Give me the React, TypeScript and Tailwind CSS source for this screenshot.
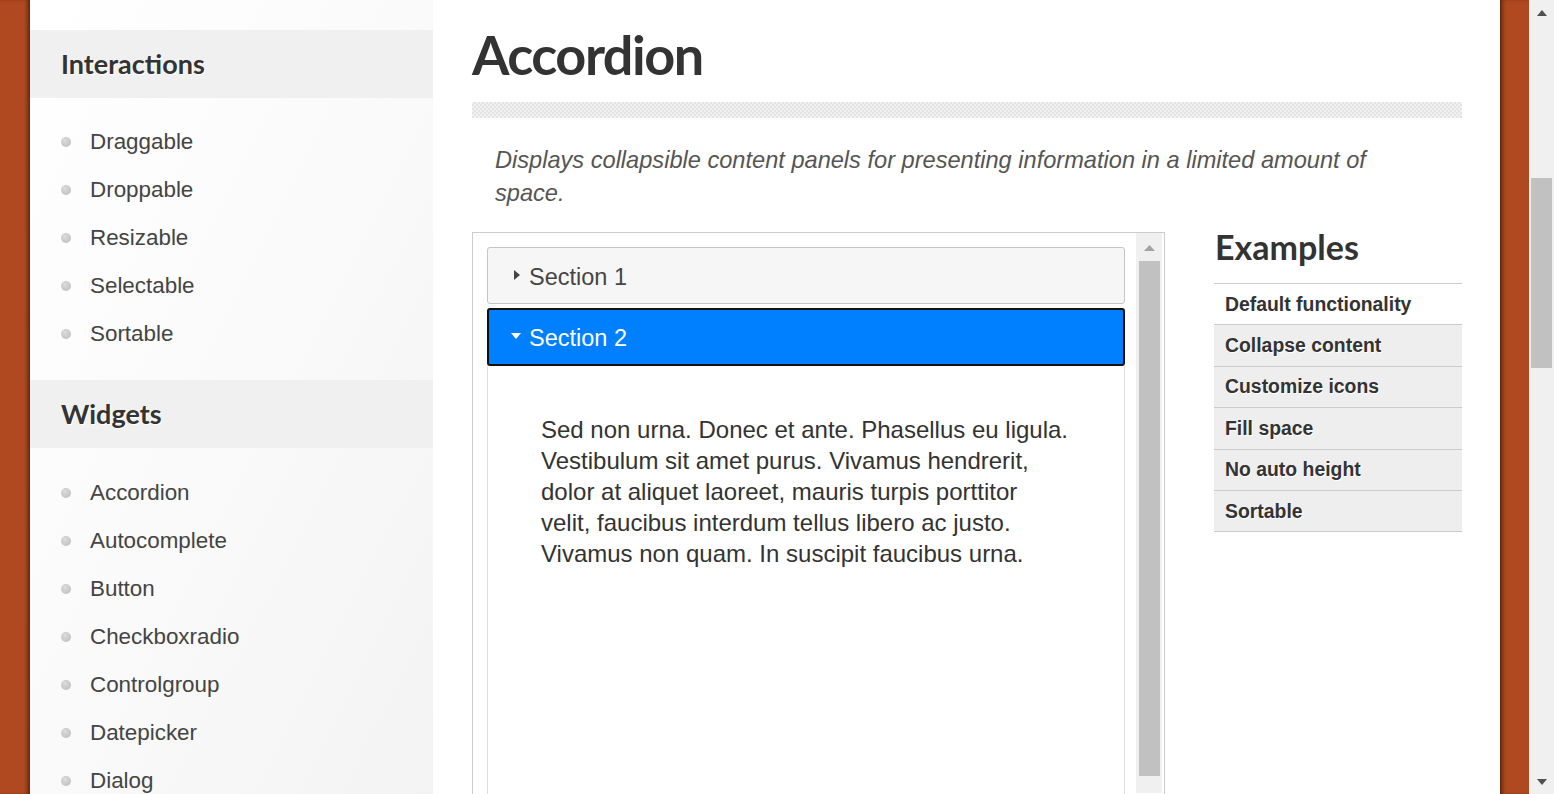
import React from "react";

const head = "font-['Lato','Liberation_Sans',sans-serif]";
const body = "font-['Liberation_Sans','Arial',sans-serif]";

function Bullet() {
  return <span className="w-[10px] h-[10px] rounded-full bg-[radial-gradient(circle_at_40%_35%,#dcdcdc,#b9b9b9)] shrink-0" />;
}

function NavList({ items }: { items: string[] }) {
  return (
    <ul className="flex flex-col">
      {items.map((t) => (
        <li key={t} className="h-[48px] shrink-0 flex items-center pl-[31px]">
          <Bullet />
          <span className={`${body} ml-[19px] text-[22.4px] text-[#444]`}>{t}</span>
        </li>
      ))}
    </ul>
  );
}

function SideHeading({ children }: { children: React.ReactNode }) {
  return (
    <div className="h-[68px] shrink-0 bg-[#f0f0f0] flex items-center pl-[31px]">
      <h2 className={`${head} font-bold text-[27px] text-[#333] [text-shadow:1px_1px_0_#fff]`}>{children}</h2>
    </div>
  );
}

export default function App() {
  const examples = [
    "Default functionality",
    "Collapse content",
    "Customize icons",
    "Fill space",
    "No auto height",
    "Sortable",
  ];
  return (
    <div className="w-[1554px] h-[794px] overflow-hidden flex bg-white">
      <div className="w-[30px] h-full bg-[#b0491f] shadow-[inset_-4px_0_4px_-2px_rgba(0,0,0,0.55)] shrink-0" />
      <div className="w-[1470px] h-full bg-white flex shrink-0 overflow-hidden">
        <aside className="w-[403px] pt-[30px] shrink-0 flex flex-col bg-linear-to-br from-white via-[#fafafa] to-[#f3f3f3]">
          <SideHeading>Interactions</SideHeading>
          <div className="pt-[20px] pb-[22px] shrink-0">
            <NavList items={["Draggable", "Droppable", "Resizable", "Selectable", "Sortable"]} />
          </div>
          <SideHeading>Widgets</SideHeading>
          <div className="pt-[21px] shrink-0">
            <NavList items={["Accordion", "Autocomplete", "Button", "Checkboxradio", "Controlgroup", "Datepicker", "Dialog"]} />
          </div>
        </aside>
        <main className="ml-[39px] w-[990px] shrink-0 flex flex-col">
          <h1 className={`${head} font-bold text-[54px] tracking-[-1.5px] leading-none text-[#333] mt-[28px] h-[74px] shrink-0 [text-shadow:1px_1px_0_#fff]`}>Accordion</h1>
          <div className="h-[16px] shrink-0 bg-[#ececec] bg-[repeating-conic-gradient(#e4e4e4_0_25%,#f1f1f1_0_50%)] bg-[length:4px_4px]" />
          <p className={`${body} italic text-[23.6px] leading-[33px] text-[#555] px-[23px] pt-[26px] pb-[22px] shrink-0`}>
            Displays collapsible content panels for presenting information in a limited amount of space.
          </p>
          <div className="flex items-start shrink-0">
            <div className="w-[693px] h-[600px] border border-[#cccccc] flex pl-[14px] pt-[14px] shrink-0">
              <div className="w-[638px] shrink-0 flex flex-col">
                <div className="h-[57px] shrink-0 bg-[#f6f6f6] border border-[#c5c5c5] rounded-[3px] flex items-center pl-[26px] pt-[4px]">
                  <svg width="6" height="10" viewBox="0 0 6 10" className="mr-[9px] -mt-[5px]"><path d="M0 0 L6 5 L0 10 Z" fill="#444" /></svg>
                  <span className={`${body} text-[23.5px] text-[#454545]`}>Section 1</span>
                </div>
                <div className="mt-[4px] h-[58px] shrink-0 bg-[#007fff] border-2 border-[#101010] rounded-[3px] flex items-center pl-[22px] pt-[4px]">
                  <svg width="10" height="6" viewBox="0 0 10 6" className="mr-[8px] -mt-[7px]"><path d="M0 0 L10 0 L5 6 Z" fill="#fff" /></svg>
                  <span className={`${body} text-[23.5px] text-white`}>Section 2</span>
                </div>
                <div className="flex-1 border border-t-0 border-[#dddddd] pl-[53px] pt-[48px]">
                  <p className={`${body} w-[532px] text-[24px] leading-[31px] text-[#333]`}>
                    Sed non urna. Donec et ante. Phasellus eu ligula. Vestibulum sit amet purus. Vivamus hendrerit, dolor at aliquet laoreet, mauris turpis porttitor velit, faucibus interdum tellus libero ac justo. Vivamus non quam. In suscipit faucibus urna.
                  </p>
                </div>
              </div>
              <div className="ml-[11px] -mt-[14px] w-[26px] h-[560px] bg-[#f0f0f0] flex flex-col items-center shrink-0">
                <div className="h-[28px] flex items-center justify-center pt-[2px]">
                  <svg width="11" height="6" viewBox="0 0 11 6"><path d="M0 6 L5.5 0 L11 6 Z" fill="#a3a3a3" /></svg>
                </div>
                <div className="w-[21px] h-[515px] bg-[#c1c1c1]" />
              </div>
            </div>
            <div className="ml-[49px] w-[248px] shrink-0">
              <h3 className={`${head} font-bold text-[34px] leading-[34px] text-[#333] pl-[1px] -mt-[2px] pb-[19px] [text-shadow:1px_1px_0_#fff]`}>Examples</h3>
              <ul className="border-t border-[#cccccc]">
                {examples.map((e, i) => (
                  <li
                    key={e}
                    className={`${body} h-[41.4px] flex items-center pl-[11px] border-b border-[#cccccc] font-bold text-[19.4px] text-[#333] [text-shadow:1px_1px_0_#fff] ${i === 0 ? "bg-white" : "bg-[#eeeeee]"}`}
                  >
                    {e}
                  </li>
                ))}
              </ul>
            </div>
          </div>
        </main>
      </div>
      <div className="w-[29px] h-full bg-[#b0491f] shadow-[inset_4px_0_4px_-2px_rgba(0,0,0,0.55)] shrink-0" />
      <div className="w-[25px] h-full bg-[#f0f0f0] flex flex-col items-center shrink-0">
        <div className="h-[25px] flex items-center justify-center">
          <svg width="10" height="6" viewBox="0 0 10 6"><path d="M0 6 L5 0 L10 6 Z" fill="#505050" /></svg>
        </div>
        <div className="mt-[153px] w-[21px] h-[190px] bg-[#c1c1c1]" />
        <div className="flex-1" />
        <div className="h-[25px] flex items-center justify-center">
          <svg width="10" height="6" viewBox="0 0 10 6"><path d="M0 0 L10 0 L5 6 Z" fill="#505050" /></svg>
        </div>
      </div>
    </div>
  );
}
